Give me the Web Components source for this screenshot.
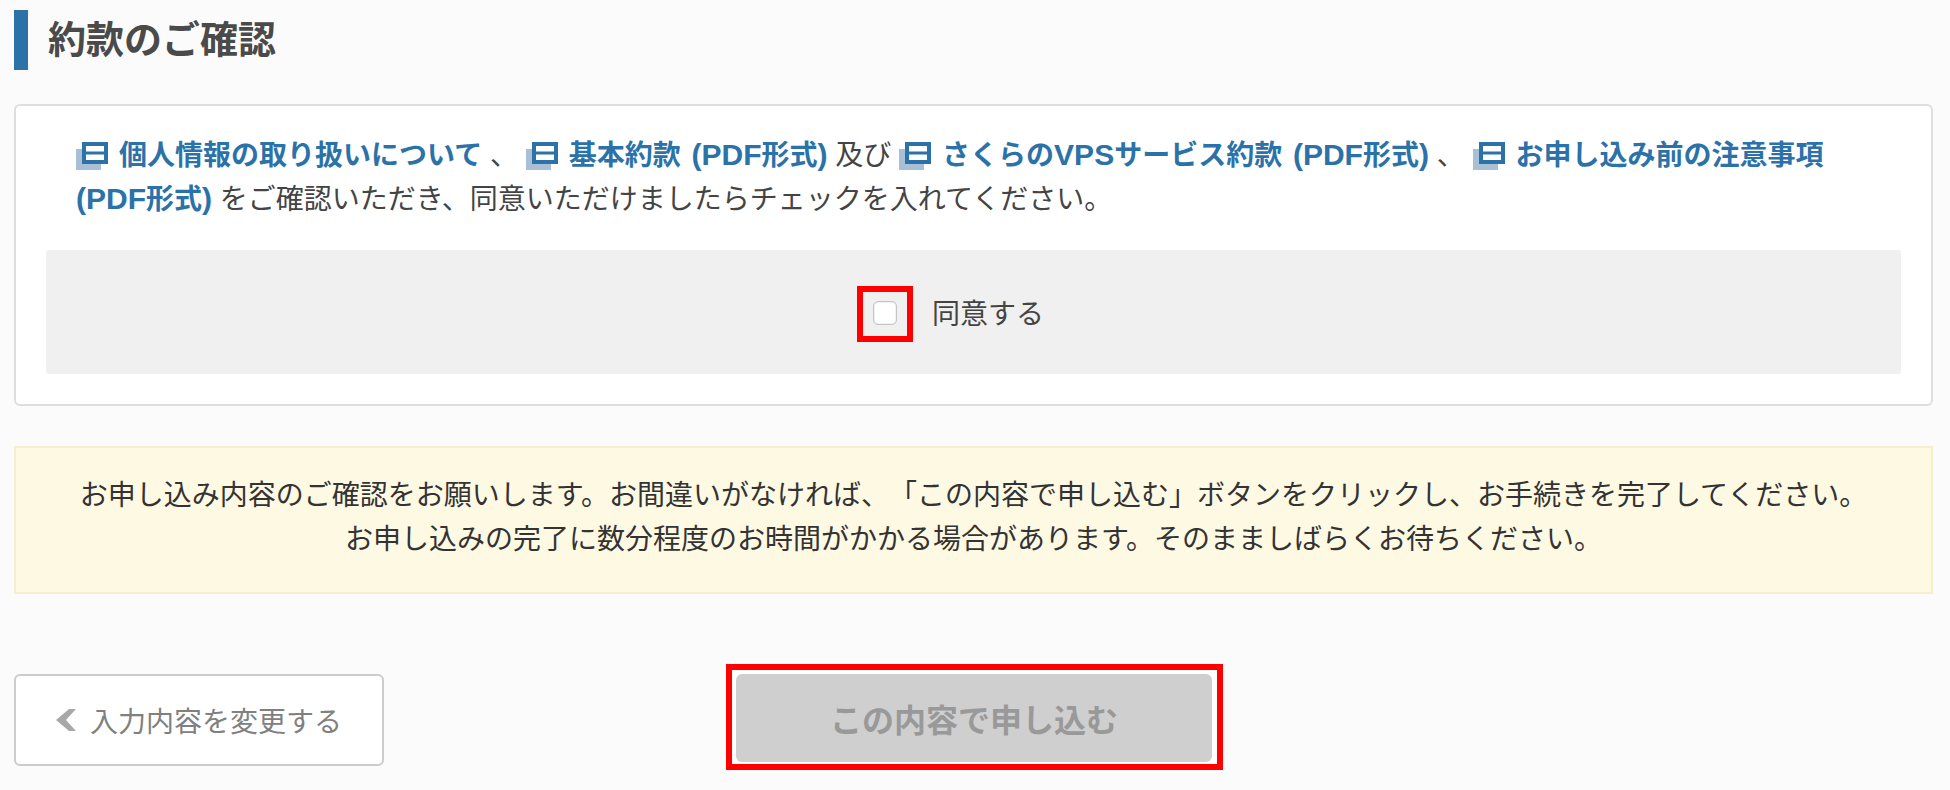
<!DOCTYPE html>
<html lang="ja"><head><meta charset="utf-8"><title>約款のご確認</title>
<style>
html,body{margin:0;height:100%;overflow:hidden}
body{background:#fbfbfb;color:#444;font-family:"Liberation Sans","Noto Sans CJK JP",sans-serif;font-size:28px;text-spacing-trim:space-all}
</style></head><body>
<confirm-page>
  <section-title>約款のご確認</section-title>
  <terms-card>
    <doc-link>個人情報の取り扱いについて</doc-link> 、 <doc-link>基本約款 <lat-text>(PDF</lat-text>形式<lat-text>)</lat-text></doc-link> 及び <doc-link>さくらの<lat-text>VPS</lat-text>サービス約款 <lat-text>(PDF</lat-text>形式<lat-text>)</lat-text></doc-link> 、 <doc-link>お申し込み前の注意事項 <lat-text>(PDF</lat-text>形式<lat-text>)</lat-text></doc-link> をご確認いただき、同意いただけましたらチェックを入れてください。
    <agree-box slot="agree">同意する</agree-box>
  </terms-card>
  <notice-box>お申し込み内容のご確認をお願いします。お間違いがなければ、「この内容で申し込む」ボタンをクリックし、お手続きを完了してください。<br>お申し込みの完了に数分程度のお時間がかかる場合があります。そのまましばらくお待ちください。</notice-box>
  <action-bar>
    <back-button slot="back">入力内容を変更する</back-button>
    <submit-button slot="submit">この内容で申し込む</submit-button>
  </action-bar>
</confirm-page>
<script>
function def(name,html){customElements.define(name,class extends HTMLElement{constructor(){super();this.attachShadow({mode:'open'}).innerHTML=html}})}
def('confirm-page',`<style>:host{display:flex;flex-direction:column;padding:10px 17px 0 14px}</style><slot></slot>`);
def('section-title',`<style>:host{display:block;border-left:14px solid #2b72a9;height:60px;line-height:60px;padding-left:20px;font-size:38px;font-weight:700;color:#4a4a4a}</style><slot></slot>`);
def('terms-card',`<style>:host{display:block;margin-top:34px;background:#fff;border:2px solid #dedede;border-radius:6px;height:298px}
.t{padding:28px 62px 0 60px;line-height:44px;height:116px}
.a{margin:0 30px}</style><div class="t"><slot></slot></div><div class="a"><slot name="agree"></slot></div>`);
def('lat-text',`<style>:host{display:inline;font-size:30px;line-height:1}</style><slot></slot>`);
def('doc-link',`<style>:host{display:inline;color:#2b72a9;font-weight:700;word-spacing:3px}
svg{width:32px;height:28px;vertical-align:-5px;margin-right:11px}</style><svg viewBox="0 0 32 28"><rect x="0" y="7" width="25" height="21" fill="#a9bfd6"/><rect x="8" y="2" width="22" height="18" fill="#fff" stroke="#2b72a9" stroke-width="4"/><rect x="7" y="9.5" width="24" height="3" fill="#2b72a9"/></svg><slot></slot>`);
def('agree-box',`<style>:host{display:flex;align-items:center;justify-content:center;height:124px;background:#f0f0f0;border-radius:3px;padding-right:46px}
.o{width:56px;height:56px;box-sizing:border-box;border:6px solid #f00;display:flex;align-items:center;justify-content:center;margin:4px 19px 0 0}
.c{width:24px;height:24px;box-sizing:border-box;background:#fff;border:1px solid #c4c4c4;border-radius:5px;box-shadow:inset 0 0 2px #ccc;margin-top:-2px}</style><div class="o"><div class="c"></div></div><slot></slot>`);
def('notice-box',`<style>:host{display:block;margin-top:40px;background:#fef9e3;border:2px solid #f5eecf;height:144px;text-align:center;line-height:44px;color:#333}
div{padding-top:26px}</style><div><slot></slot></div>`);
def('action-bar',`<style>:host{display:block;position:relative;margin-top:80px}
.b{display:flex}.s{position:absolute;left:712px;top:-10px}</style><div class="b"><slot name="back"></slot></div><div class="s"><slot name="submit"></slot></div>`);
def('back-button',`<style>:host{display:flex;align-items:center;width:370px;height:92px;box-sizing:border-box;background:#fff;border:2px solid #ccc;border-radius:6px;padding-left:40px;color:#808080;font-size:28px}
svg{width:20px;height:22px;margin-right:14px}</style><svg viewBox="0 0 20 22"><path d="M20 0H13L0 11l13 11h7L10 11z" fill="#a8a8a8"/></svg><slot></slot>`);
def('submit-button',`<style>:host{display:block;width:497px;height:106px;box-sizing:border-box;border:6px solid #f00;background:#fff;padding:4px 5px 0 4px}
div{height:88px;background:#cfcfcf;border-radius:6px;display:flex;align-items:center;justify-content:center;font-size:32px;font-weight:700;color:#999}</style><div><slot></slot></div>`);
</script>
</body></html>
